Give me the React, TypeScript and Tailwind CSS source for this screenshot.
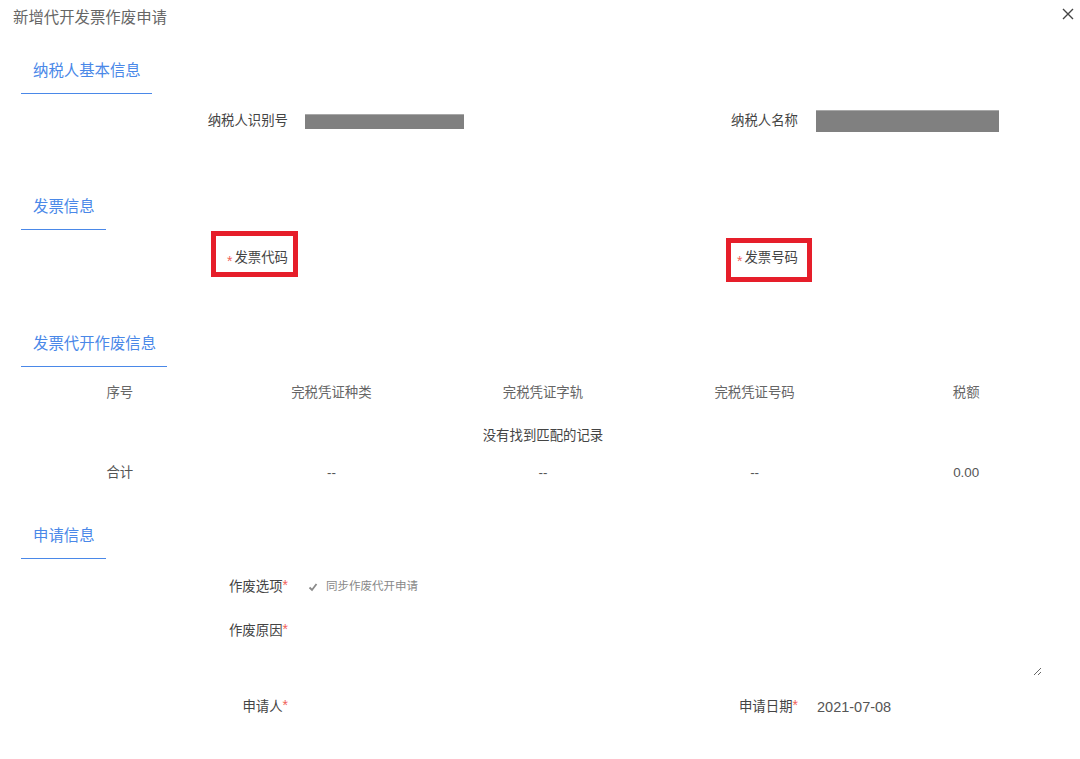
import React from "react";

const FONT = { fontFamily: '"Liberation Sans", "Noto Sans CJK SC", sans-serif' };

function SectionHeader({ title }: { title: string }) {
  return (
    <div className="ml-[21px] inline-flex border-b border-[#4a88e8] pl-[12px] pr-[11px] pb-[10px]">
      <span className="text-[15.4px] leading-[24px] text-[#4a88e8]">{title}</span>
    </div>
  );
}

function Star({ low }: { low?: boolean }) {
  return (
    <span
      className={
        "text-[14px] leading-none text-[#f0625a] " + (low ? "relative top-[4px]" : "relative top-[-1px]")
      }
    >
      *
    </span>
  );
}

function Label({ children }: { children: React.ReactNode }) {
  return (
    <div className="w-[258px] shrink-0 text-right text-[13.4px] leading-[30px] text-[#444]">{children}</div>
  );
}

export default function App() {
  return (
    <div className="relative h-[759px] w-[1080px] overflow-hidden bg-white" style={FONT}>
      {/* title bar */}
      <div className="flex h-[36px] items-center justify-between pl-[13px] pr-[0px]">
        <span className="text-[15.4px] leading-[36px] text-[#666]">新增代开发票作废申请</span>
        <svg className="mr-[0px] mt-[-8px]" width="24" height="24" viewBox="0 0 24 24">
          <path d="M7 7 L17 17 M17 7 L7 17" stroke="#444" strokeWidth="1.4" fill="none" />
        </svg>
      </div>

      {/* 纳税人基本信息 */}
      <div className="mt-[23px]">
        <SectionHeader title="纳税人基本信息" />
      </div>
      <div className="ml-[30px] mt-[12px] grid grid-cols-[510px_510px]">
        <div className="flex items-center gap-[17px]">
          <Label>纳税人识别号</Label>
          <div className="h-[15px] w-[159px] border-t border-[#a8a8a8] bg-[#808080]" />
        </div>
        <div className="flex items-center gap-[18px]">
          <Label>纳税人名称</Label>
          <div className="h-[22px] w-[183px] border-t border-[#a8a8a8] bg-[#808080]" />
        </div>
      </div>

      {/* 发票信息 */}
      <div className="mt-[59px]">
        <SectionHeader title="发票信息" />
      </div>
      <div className="ml-[30px] mt-[13px] grid h-[30px] grid-cols-[510px_510px]">
        <div className="flex items-center">
          <div className="flex w-[258px] justify-end">
            <span className="relative inline-block text-[13.4px] leading-[20px] text-[#444]">
              <span className="mr-[2px]">
                <Star low />
              </span>
              发票代码
              <span className="pointer-events-none absolute left-[-16px] right-[-10px] top-[-17px] bottom-[-9px] border-[5px] border-[#e61e2a]" />
            </span>
          </div>
        </div>
        <div className="flex items-center">
          <div className="flex w-[258px] justify-end">
            <span className="relative inline-block text-[13.4px] leading-[20px] text-[#444]">
              <span className="mr-[2px]">
                <Star low />
              </span>
              发票号码
              <span className="pointer-events-none absolute left-[-11px] right-[-14px] top-[-10px] bottom-[-14px] border-[5px] border-[#e61e2a]" />
            </span>
          </div>
        </div>
      </div>

      {/* 发票代开作废信息 */}
      <div className="mt-[59px]">
        <SectionHeader title="发票代开作废信息" />
      </div>
      <div className="ml-[14px] mt-[6px] w-[1058px] text-[13.4px]">
        <div className="grid h-[40px] grid-cols-5 items-center text-center text-[#666]">
          <div>序号</div>
          <div>完税凭证种类</div>
          <div>完税凭证字轨</div>
          <div>完税凭证号码</div>
          <div>税额</div>
        </div>
        <div className="flex h-[46px] items-center justify-center text-[#444]">没有找到匹配的记录</div>
        <div className="grid h-[28px] grid-cols-5 items-center text-center text-[#555]">
          <div>合计</div>
          <div>--</div>
          <div>--</div>
          <div>--</div>
          <div>0.00</div>
        </div>
      </div>

      {/* 申请信息 */}
      <div className="mt-[37px]">
        <SectionHeader title="申请信息" />
      </div>
      <div className="ml-[30px] mt-[13px] flex items-center gap-[17px]">
        <Label>
          作废选项<Star />
        </Label>
        <div className="flex items-center gap-[8px] text-[11.5px] text-[#888]">
          <svg width="10" height="10" viewBox="0 0 10 10" className="ml-[3px]">
            <path d="M1.5 5.5 L4 8 L8.5 2" stroke="#8a8a8a" strokeWidth="1.8" fill="none" />
          </svg>
          <span>同步作废代开申请</span>
        </div>
      </div>
      <div className="ml-[30px] mt-[14px] flex items-start gap-[17px]">
        <Label>
          作废原因<Star />
        </Label>
        <textarea className="h-[60px] w-[737px] resize border-0 bg-white text-[13.4px] outline-none" />
      </div>
      <div className="ml-[30px] mt-[16px] grid grid-cols-[510px_510px]">
        <div className="flex items-center gap-[17px]">
          <Label>
            申请人<Star />
          </Label>
        </div>
        <div className="flex items-center gap-[19px]">
          <Label>
            申请日期<Star />
          </Label>
          <span className="text-[14.5px] leading-[30px] text-[#555]">2021-07-08</span>
        </div>
      </div>
    </div>
  );
}
